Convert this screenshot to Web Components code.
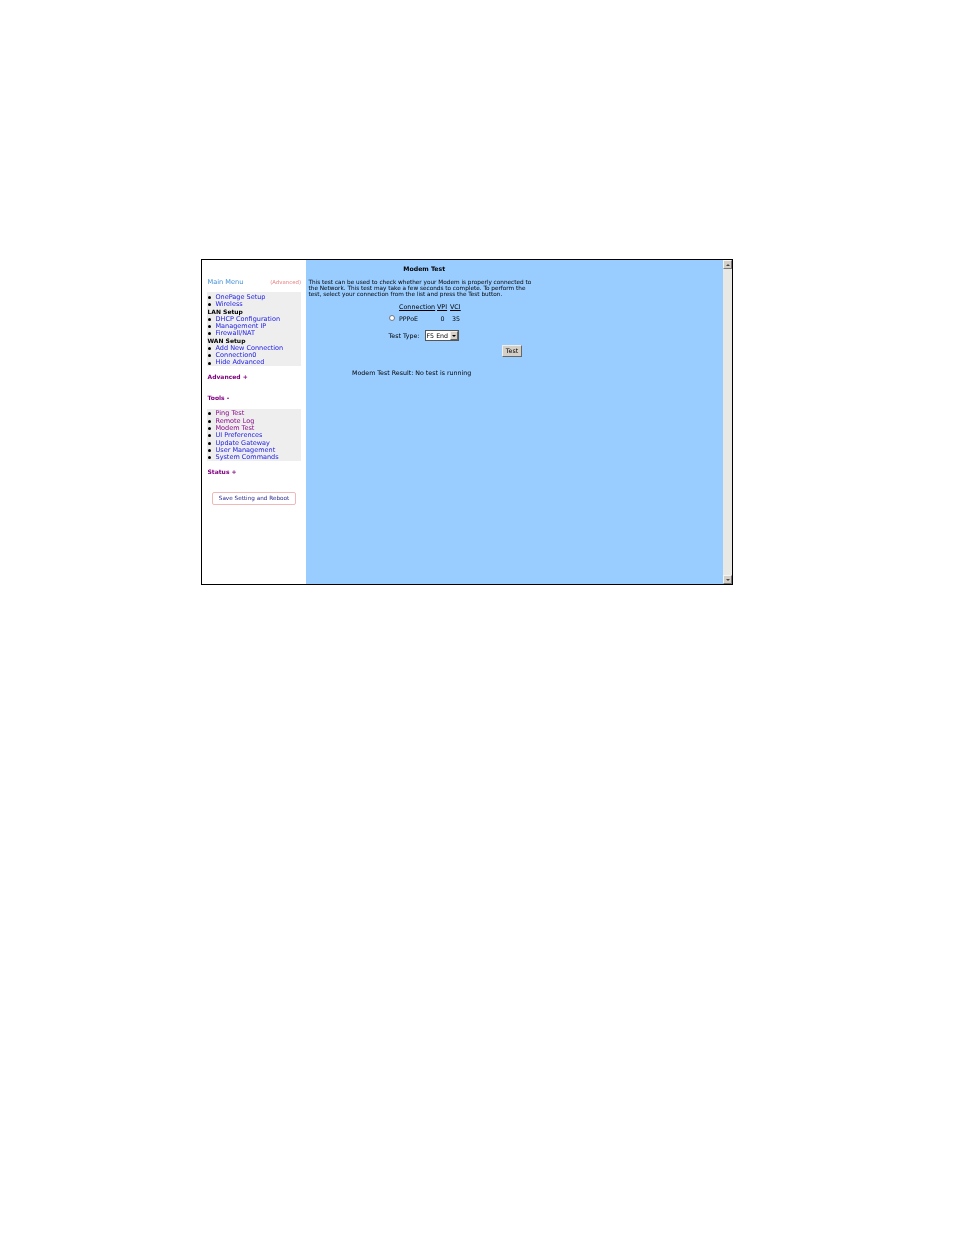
<!DOCTYPE html>
<html>
<head>
<meta charset="utf-8">
<style>
  html, body { margin: 0; background: #fff; }
  body { padding: 259px 0 0 201px; height: 976px; font-family: "DejaVu Sans", sans-serif; }
</style>
</head>
<body>
<modem-frame>
  <side-menu slot="menu">
    <menu-title slot="top"></menu-title>
    <menu-box>
      <menu-link>OnePage Setup</menu-link>
      <menu-link>Wireless</menu-link>
      <menu-head>LAN Setup</menu-head>
      <menu-link>DHCP Configuration</menu-link>
      <menu-link>Management IP</menu-link>
      <menu-link>Firewall/NAT</menu-link>
      <menu-head>WAN Setup</menu-head>
      <menu-link>Add New Connection</menu-link>
      <menu-link>Connection0</menu-link>
      <menu-link>Hide Advanced</menu-link>
    </menu-box>
    <menu-section style="margin-top:7px">Advanced +</menu-section>
    <menu-section style="margin-top:14px">Tools -</menu-section>
    <menu-box style="margin-top:7px">
      <menu-link visited>Ping Test</menu-link>
      <menu-link visited>Remote Log</menu-link>
      <menu-link visited>Modem Test</menu-link>
      <menu-link>UI Preferences</menu-link>
      <menu-link>Update Gateway</menu-link>
      <menu-link>User Management</menu-link>
      <menu-link>System Commands</menu-link>
    </menu-box>
    <menu-section style="margin-top:7px">Status +</menu-section>
    <save-button>Save Setting and Reboot</save-button>
  </side-menu>
  <modem-test slot="content"></modem-test>
</modem-frame>

<script>
// outer window: menu, content and the scrollbar
class ModemFrame extends HTMLElement {
  constructor() {
    super();
    this.attachShadow({ mode: "open" }).innerHTML = `
      <style>
        :host { display: flex; box-sizing: border-box; width: 532px; height: 326px; border: 1.5px solid #000; background: #fff; }
        .menu { width: 104px; flex: none; }
        .content { flex: 1; background: #99ccff; }
        .bar { width: 9px; flex: none; background: #e8e8e4; display: flex; flex-direction: column; justify-content: space-between; }
        .btn { height: 9px; background: #d4d0c8; border: 1px solid; border-color: #f4f4f0 #777 #777 #f4f4f0; box-sizing: border-box; display: flex; align-items: center; justify-content: center; }
        .btn i { display: block; width: 0; height: 0; border: 2px solid transparent; }
        .up i { border-bottom-color: #444; border-top-width: 0; }
        .down i { border-top-color: #444; border-bottom-width: 0; }
      </style>
      <div class="menu"><slot name="menu"></slot></div>
      <div class="content"><slot name="content"></slot></div>
      <div class="bar"><div class="btn up"><i></i></div><div class="btn down"><i></i></div></div>`;
  }
}

class SideMenu extends HTMLElement {
  constructor() {
    super();
    this.attachShadow({ mode: "open" }).innerHTML = `
      <style>
        :host { display: block; padding: 17px 5px 0 5px; font: 6.5px/7.3px "DejaVu Sans", sans-serif; filter: blur(0.25px); }
      </style>
      <slot name="top"></slot><slot></slot>`;
  }
}

class MenuTitle extends HTMLElement {
  constructor() {
    super();
    this.attachShadow({ mode: "open" }).innerHTML = `
      <style>
        :host { display: flex; justify-content: space-between; align-items: baseline; padding: 2px 0 0 0.5px; margin-bottom: 4px; height: 9px; }
        .main { color: #3f8fd8; font-size: 6.6px; }
        .adv { color: #e88080; font-size: 5.4px; }
      </style>
      <span class="main">Main Menu</span><span class="adv">(Advanced)</span>`;
  }
}

class MenuBox extends HTMLElement {
  constructor() {
    super();
    this.attachShadow({ mode: "open" }).innerHTML = `
      <style>:host { display: block; background: #eeeeee; padding: 0.5px 0; }</style>
      <slot></slot>`;
  }
}

class MenuLink extends HTMLElement {
  constructor() {
    super();
    this.attachShadow({ mode: "open" }).innerHTML = `
      <style>
        :host { display: flex; align-items: center; box-sizing: border-box; height: 7.3px; padding-top: 2.5px; color: #1a1ae6; white-space: nowrap; }
        :host([visited]) { color: #8a0a8a; }
        .dot { width: 3px; height: 3px; border-radius: 50%; background: #000; margin: 0 4.5px 0 1px; flex: none; }
      </style>
      <span class="dot"></span><span><slot></slot></span>`;
  }
}

class MenuHead extends HTMLElement {
  constructor() {
    super();
    this.attachShadow({ mode: "open" }).innerHTML = `
      <style>:host { display: block; box-sizing: border-box; height: 7.3px; padding: 0.5px 0 0 0.5px; font-size: 6px; font-weight: bold; color: #000; white-space: nowrap; }</style>
      <slot></slot>`;
  }
}

class MenuSection extends HTMLElement {
  constructor() {
    super();
    this.attachShadow({ mode: "open" }).innerHTML = `
      <style>:host { display: block; font-size: 6px; font-weight: bold; color: #800080; height: 7.3px; padding-left: 0.5px; white-space: nowrap; }</style>
      <slot></slot>`;
  }
}

class SaveButton extends HTMLElement {
  constructor() {
    super();
    this.attachShadow({ mode: "open" }).innerHTML = `
      <style>
        :host { display: flex; align-items: center; justify-content: center; box-sizing: border-box; width: 84px; height: 13px; margin: 17px 0 0 5px; border: 1px solid #f0b8b8; border-radius: 2px; color: #2a2a90; background: #fff; font-size: 5.7px; white-space: nowrap; }
      </style>
      <slot></slot>`;
  }
}

// the modem test form on the blue panel
class ModemTest extends HTMLElement {
  constructor() {
    super();
    this.attachShadow({ mode: "open" }).innerHTML = `
      <style>
        :host { display: block; box-sizing: border-box; width: 234px; padding: 5px 0 0 2.5px; color: #000; font: 5.75px/6.3px "DejaVu Sans", sans-serif; filter: blur(0.25px); }
        h1 { margin: 0 0 6.5px; font-size: 6.2px; line-height: 7px; font-weight: bold; text-align: center; }
        p { margin: 0; width: 226px; }
        .form { font-size: 6.3px; line-height: 7px; }
        .cols, .row { display: grid; grid-template-columns: 36px 11px 12px; column-gap: 2px; margin: 7px 0 0 90.5px; width: max-content; }
        .cols { font-size: 6.4px; }
        .row { margin-top: 4px; }
        .row span:nth-child(2), .row span:nth-child(3) { text-align: center; }
        .radio { position: absolute; margin-left: -10px; margin-top: 0; box-sizing: border-box; width: 6px; height: 6px; border-radius: 50%; background: #fff; border: 1px solid #777; }
        .type { display: flex; align-items: center; margin: 8px 0 0 80px; height: 11px; }
        .select { display: flex; align-items: center; box-sizing: border-box; width: 34px; height: 11px; margin-left: 5px; background: #fff; border: 1px solid #555; padding-left: 1px; }
        .select span { flex: 1; }
        .select i { width: 8px; height: 9px; box-sizing: border-box; background: #d4d0c8; border: 1px solid; border-color: #eee #666 #666 #eee; display: flex; align-items: center; justify-content: center; }
        .select i::after { content: ""; border: 2px solid transparent; border-top-color: #000; border-bottom-width: 0; }
        .go { display: flex; align-items: center; justify-content: center; box-sizing: border-box; width: 20px; height: 12px; margin: 3.5px 0 0 193.5px; background: #d4d0c8; border: 1px solid; border-color: #eee #666 #666 #eee; }
        .result { margin: 12px 0 0 43.5px; white-space: nowrap; }
      </style>
      <h1>Modem Test</h1>
      <p>This test can be used to check whether your Modem is properly connected to the Network. This test may take a few seconds to complete. To perform the test, select your connection from the list and press the Test button.</p>
      <div class="form">
        <div class="cols"><u>Connection</u><u>VPI</u><u>VCI</u></div>
        <div class="row"><span><span class="radio"></span>PPPoE</span><span>0</span><span>35</span></div>
        <div class="type">Test Type:<div class="select"><span>F5 End</span><i></i></div></div>
        <div class="go">Test</div>
        <div class="result">Modem Test Result: No test is running</div>
      </div>`;
  }
}

customElements.define("modem-frame", ModemFrame);
customElements.define("side-menu", SideMenu);
customElements.define("menu-title", MenuTitle);
customElements.define("menu-box", MenuBox);
customElements.define("menu-link", MenuLink);
customElements.define("menu-head", MenuHead);
customElements.define("menu-section", MenuSection);
customElements.define("save-button", SaveButton);
customElements.define("modem-test", ModemTest);
</script>
</body>
</html>
